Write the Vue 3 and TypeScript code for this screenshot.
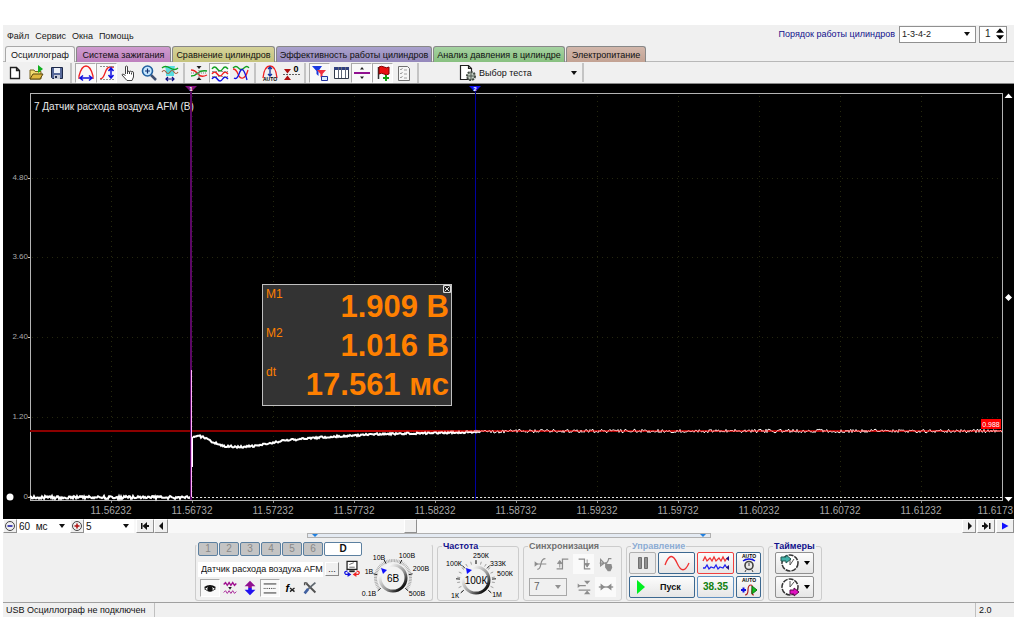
<script setup lang="ts">
import { ref } from 'vue'

interface Shape {
  d?: string
  s?: string
  f?: string
  w?: number
  dash?: string
  t?: string
  x?: number
  y?: number
  size?: number
}
interface Tool {
  name: string
  icon: Shape[]
  pressed?: boolean
}

const red = '#f02020'
const blue = '#1010e0'
const ink = '#202020'
const green = '#10a020'
const mute = '#8c8c8c'

const tabs = [
  { id: 'scope', label: 'Осциллограф' },
  { id: 'ignition', label: 'Система зажигания' },
  { id: 'compare', label: 'Сравнение цилиндров' },
  { id: 'efficiency', label: 'Эффективность работы цилиндров' },
  { id: 'pressure', label: 'Анализ давления в цилиндре' },
  { id: 'power', label: 'Электропитание' },
]
const activeTab = ref('scope')

const toolGroups: Tool[][] = [
  [
    { name: 'Новый', icon: [{ d: 'M5.5 4.5h6l3 3v8h-9zM11.5 4.5v3h3', s: ink, f: '#fff', w: 1.3 }] },
    {
      name: 'Открыть',
      icon: [
        { d: 'M4 16V7h4l1 1.500h6V16z', f: '#f3dc70', s: '#7a6420' },
        { d: 'M4 16l3-5h10l-3 5z', f: '#e0b840', s: '#5a4810' },
        { d: 'M12 2l5 4-5 4z', f: '#10b020' },
      ],
    },
    {
      name: 'Сохранить',
      icon: [
        { d: 'M4.500 4.500h11v11h-10l-1-1z', f: '#56689a', s: '#1c2848' },
        { d: 'M7 5h6v5H7z', f: '#eef2fa' },
        { d: 'M7 12h6v4H7z', f: '#c8ccd8' },
        { d: 'M8 13h2v2H8z', f: '#1c2848' },
      ],
    },
  ],
  [
    {
      name: 'Период',
      pressed: true,
      icon: [
        { d: 'M3 16V13C5 5 8 3 10 3s5 2 7 10v3', s: red, w: 1.3 },
        { d: 'M4 15h12M7 12.500L4 15l3 2.500M13 12.500L16 15l-3 2.500', s: blue, w: 1.5 },
      ],
    },
    {
      name: 'Амплитуда',
      pressed: true,
      icon: [
        { d: 'M3 16c6 0 4-12 10-12h4', s: red, w: 1.3 },
        { d: 'M3 3.500h15M3 16.500h15', s: '#909090', dash: '2 1' },
        { d: 'M14 5v10M11.500 8L14 5l2.500 3M11.500 12L14 15l2.500-3', s: blue, w: 1.5 },
      ],
    },
    {
      name: 'Рука',
      icon: [
        {
          d: 'M7.500 11V3.500q1.300-1 2 0V9q0-1.500 2 -.5 0-1 2 0 2-.5 2 1.500v4l-1.500 3.500h-5L4 12q0-2 3.500.5M9.500 9v2M11.500 9v2M13.500 9.500v2',
          s: '#404040',
          f: '#fff',
        },
      ],
    },
    {
      name: 'Масштаб',
      icon: [
        { d: 'M12 12l5 5', s: '#405070', w: 2.5 },
        { d: 'M13.500 8a5 5 0 1 1-10 0a5 5 0 1 1 10 0', s: '#2060a0', f: '#c8e8ff', w: 1.6 },
        { d: 'M6 8h5M8.500 5.500v5', s: '#103070', w: 1.2 },
      ],
    },
    {
      name: 'Область',
      icon: [
        { d: 'M5 3h10l-1 5v5H6V8z', f: '#58dce0' },
        { d: 'M2 5q3-3 8 0t8 0', s: green, w: 1.3 },
        { d: 'M2 9q2-3 4 0t4 0t4 0t4 0', s: '#a06040', w: 1.2 },
        { d: 'M6 16h8M8 14l-2 2 2 2M12 14l2 2-2 2', s: '#101080', w: 1.2 },
      ],
    },
  ],
  [
    {
      name: 'Сжать',
      icon: [
        { d: 'M2 7q4 0 7 4t9 1', s: red, w: 1.3 },
        { d: 'M2 13q4 0 7-3t9-2', s: green, w: 1.3 },
        { d: 'M7.500 3h5l-2.500 3zM7.500 17h5l-2.500-3z', f: ink },
        { d: 'M2 10h16M10 5v10', s: '#808080', dash: '1 1' },
      ],
    },
    {
      name: 'Все каналы',
      pressed: true,
      icon: [
        { d: 'M2 6q2.500-4 5.300 0t5.300 0t5.300 0', s: green, w: 1.4 },
        { d: 'M2 11q2.500-4 5.300 0t5.300 0t5.300 0', s: red, w: 1.4 },
        { d: 'M2 16q2.500-4 5.300 0t5.300 0t5.300 0', s: blue, w: 1.4 },
        { d: 'M2 8.500h16M2 13.500h16', s: '#909090', dash: '2 1' },
      ],
    },
    {
      name: 'Наложить',
      icon: [
        { d: 'M2 5q3-3 5.500 0t5.500 0t5 0', s: green, w: 1.3 },
        { d: 'M2 6q3 0 5 5t5 4t5-8', s: red, w: 1.3 },
        { d: 'M3 15q3 2 5-4t4-4t4 10', s: blue, w: 1.3 },
      ],
    },
  ],
  [
    {
      name: 'Автоподбор',
      icon: [
        { d: 'M3 15C4 5 7 3 10 3s6 2 7 12', s: red, w: 1.3 },
        { d: 'M10 4v9M8 6l2-2 2 2M8 11l2 2 2-2', s: '#1030a0', w: 1.3 },
        { t: 'AUTO', x: 10, y: 18, size: 5 },
      ],
    },
    {
      name: 'Обнулить',
      icon: [
        { d: 'M2 11.500h17', s: '#606060', dash: '2 1' },
        { d: 'M3 6h7l-3.500 4.500zM3 17h7l-3.500-4.500z', f: '#b01010' },
        { t: '0', x: 15, y: 9, size: 9 },
      ],
    },
  ],
  [
    {
      name: 'Фильтр',
      pressed: true,
      icon: [
        { d: 'M2 3h10l-3.500 5v5l-2-2V8z', f: '#1838e0' },
        { d: 'M7 7h9l-3.500 4v5l-2-2v-3z', f: '#f03040' },
        { d: 'M11.500 13.500h6v4h-6z', f: '#d8ecff', s: '#2030a0' },
      ],
    },
    {
      name: 'Таблица',
      icon: [
        { d: 'M3.500 4.500h14v11h-14z', f: '#fff', s: '#303848' },
        { d: 'M3 4h15v3H3z', f: '#304080' },
        { d: 'M7.500 4v11M10.500 4v11M14.500 4v11', s: '#606878' },
      ],
    },
    {
      name: 'Линия',
      pressed: true,
      icon: [
        { d: 'M2 10h16', s: '#901090', w: 2 },
        { d: 'M8 6.500l2-2.500 2 2.500zM8 13.500l2 2.500 2-2.500z', f: ink },
      ],
    },
    {
      name: 'Добавить флаг',
      pressed: true,
      icon: [
        { d: 'M5.500 4v12', s: '#303030', w: 1.5 },
        { d: 'M6 4q2.500-1.500 5 0t5 0v7q-2.500 1.500-5 0t-5 0z', f: '#e81010', s: '#800000' },
        { d: 'M13 12v6M10 15h6', s: '#10a010', w: 2 },
      ],
    },
    {
      name: 'Отчёт',
      icon: [
        { d: 'M4.500 3.500h9l2 2v12h-11z', f: '#f6f6f6', s: '#707070' },
        { d: 'M6 6l1 1 1.500-2M6 10l1 1 1.500-2M6 14l1 1 1.500-2M10 7h3M10 11h3M10 15h3', s: '#a0a0a0' },
      ],
    },
  ],
]

const gearPage: Shape[] = [
  { d: 'M2.500 2.500h8l3 3v11h-11zM10.500 2.500v3h3', s: ink, f: '#fff', w: 1.2 },
  { d: 'M17 13a4 4 0 1 1-8 0a4 4 0 1 1 8 0', s: '#404840', f: '#c0ccc0', w: 2, dash: '2 1' },
  { d: 'M13 9v8M9 13h8', s: '#505850' },
]

const channelTools: Tool[] = [
  {
    name: 'Показать канал',
    pressed: true,
    icon: [
      { d: 'M4 11q6-6 12 0q-6 5-12 0z', f: '#fff', s: ink },
      { d: 'M13 11a3 3 0 1 1-6 0a3 3 0 1 1 6 0', f: '#101010' },
      { d: 'M4 9.500q6-4 12 0', s: '#101010', w: 1.8 },
    ],
  },
  {
    name: 'Инверсия',
    icon: [
      { d: 'M3 6l2-2 2 3 2-3 2 3 2-3 2 3 2-2', s: '#a01090', w: 1.6 },
      { d: 'M3 15l2-2 2 3 2-3 2 3 2-3 2 3 2-2', s: '#a01090' },
      { d: 'M8 9h4l-2 3z', f: ink },
    ],
  },
  {
    name: 'Смещение',
    icon: [
      { d: 'M10 2l6 6h-4v2H8V8H4z', f: '#901090' },
      { d: 'M10 18l6-6h-4v-2H8v2H4z', f: '#2010f0' },
    ],
  },
  {
    name: 'Уровни',
    pressed: true,
    icon: [
      { d: 'M3 5.500h14M3 15.500h14', s: ink },
      { d: 'M3 10.500h14', s: ink, dash: '1 1' },
    ],
  },
  {
    name: 'Функция',
    icon: [{ t: 'f', x: 7, y: 14, size: 12 }, { d: 'M10 10l5 4M10 14l5-4', s: ink, w: 1.5 }],
  },
  {
    name: 'Настройки',
    icon: [
      { d: 'M6 5l10 10', s: '#505050', w: 2 },
      { d: 'M16 4l-8 7', s: '#606870', w: 2 },
      { d: 'M8 11l-4 5', s: '#4060a0', w: 3 },
      { d: 'M4 4l3 .5M4 4v3', s: '#505050', w: 1.5 },
    ],
  },
]

const deviceIcon: Shape[] = [
  { d: 'M4.500 1.500h11v9h-11z', f: '#fff', s: ink, w: 1.4 },
  { d: 'M7 5l5-2M7 8h6', s: '#606060' },
  { d: 'M7 12.500h6', s: ink, w: 2 },
  { d: 'M5 12q-5 1-2 4h5M5 14l3 2-3 2', s: blue, w: 1.4 },
  { d: 'M15 12q5 1 2 4h-5M15 14l-3 2 3 2', s: red, w: 1.4 },
]

const syncTop: Tool[] = [
  { name: 'Без синхронизации', icon: [{ d: 'M7 16q3 0 4-6t5-6M5 10h12', s: mute, w: 1.3 }, { d: 'M4 7l4 3-4 3z', f: mute }] },
  { name: 'По фронту', icon: [{ d: 'M4 15.500h6.500v-11H17', s: mute, w: 1.4 }, { d: 'M7.500 14V8M5 9.500L7.500 6 10 9.500z', s: mute, f: mute }] },
  { name: 'По спаду', pressed: true, icon: [{ d: 'M4 4.500h6.500v11H17', s: mute, w: 1.4 }, { d: 'M13.500 5v6M11 9.500l2.500 4 2.500-4z', s: mute, f: mute }] },
  {
    name: 'Вручную',
    icon: [
      { d: 'M3 9h6q3 0 4-5h3M4 5l4 4-4 3z', s: mute, w: 1.3 },
      { d: 'M9 8l3 2 4 0 1 4-2 4h-3l-3-4z', f: mute },
    ],
  },
]
const syncBottom: Tool[] = [
  { name: 'Уровень', icon: [{ d: 'M4 8.500h8M4 13.500h13', s: mute, w: 1.3 }, { d: 'M10 3h7l-3.500 4zM10 18h7l-3.500-4zM3 6l3 2.500-3 2.500z', f: mute }] },
  { name: 'Центр', pressed: true, icon: [{ d: 'M2 10h16', s: mute, w: 1.5 }, { d: 'M4 6l5 4-5 4zM16 6l-5 4 5 4z', f: mute }] },
]

const autoClock: Shape[] = [
  { t: 'AUTO', x: 10, y: 5, size: 5 },
  { d: 'M4 8q6-4 12 0M4 8l3-2M16 8l-3-2', s: blue, w: 1.5 },
  { d: 'M14 12.500a4 4 0 1 1-8 0a4 4 0 1 1 8 0', f: '#e8e8e8', s: '#404040', w: 1.6 },
  { d: 'M10 10v3M7 17l-1 2M13 17l1 2', s: '#404040' },
]
const autoPlay: Shape[] = [
  { t: 'AUTO', x: 10, y: 5, size: 5 },
  { d: 'M6 18q3 0 3-5t3-5q2 0 1 5t2 5', s: '#b02020', w: 1.2 },
  { d: 'M2 13h5M4.500 10.500v5', s: blue, w: 2 },
  { d: 'M13 9l5 4-5 4z', f: '#10c020', s: '#107010' },
]

const plotLeft = 30
const plotRight = 1002
const yMarks = [
  { y: 178, label: '4.80' },
  { y: 257, label: '3.60' },
  { y: 337, label: '2.40' },
  { y: 417, label: '1.20' },
  { y: 497, label: '0' },
]
const xMarks = Array.from({ length: 11 }, (_, i) => ({
  x: Math.round(111 + i * 81),
  label: (11.56232 + i * 0.005).toFixed(5),
}))

const curve: [number, number][] = [
  [193, 437], [199, 436], [205, 438], [213, 442], [222, 446], [240, 447], [256, 446],
  [275, 442], [300, 439], [340, 436], [380, 434], [430, 433], [475, 432], [520, 431], [1002, 431],
]
function level(x: number): number {
  for (let i = 1; i < curve.length; i++) {
    const [x0, y0] = curve[i - 1]
    const [x1, y1] = curve[i]
    if (x <= x1) return y0 + ((y1 - y0) * (x - x0)) / (x1 - x0)
  }
  return 431
}
let seed = 17
function noise(): number {
  seed = (seed * 16807) % 2147483647
  return seed / 2147483647 - 0.5
}
function trace(from: number, to: number, at: (x: number) => number, amp: number): string {
  const points: string[] = []
  for (let x = from; x <= to; x++) points.push(`${x},${(at(x) + noise() * amp).toFixed(1)}`)
  return points.join(' ')
}
const idleTrace = trace(plotLeft, 190, () => 497.5, 3)
const riseTrace = trace(193, 480, level, 2)
const flatTrace = trace(480, plotRight, level, 3.5)

const readings = [
  { name: 'M1', value: '1.909 В' },
  { name: 'M2', value: '1.016 В' },
  { name: 'dt', value: '17.561 мс' },
]

function ticks(cx: number, cy: number, count: number, inner: number, outer: number): string {
  const out: string[] = []
  for (let i = 0; i <= count; i++) {
    const a = ((140 + (260 * i) / count) * Math.PI) / 180
    const c = Math.cos(a)
    const s = Math.sin(a)
    out.push(`M${(cx + c * inner).toFixed(1)} ${(cy + s * inner).toFixed(1)}L${(cx + c * outer).toFixed(1)} ${(cy + s * outer).toFixed(1)}`)
  }
  return out.join('')
}
const knobs = {
  volts: {
    name: 'Диапазон', value: '6В', cx: 34, fine: ticks(34, 30, 50, 16, 19), coarse: ticks(34, 30, 5, 16, 20),
    labels: [
      { t: '0.1В', x: 10, y: 48 }, { t: '1В', x: 10, y: 26 }, { t: '10В', x: 20, y: 12 },
      { t: '100В', x: 48, y: 10 }, { t: '200В', x: 62, y: 23 }, { t: '500В', x: 58, y: 48 },
    ],
  },
  rate: {
    name: 'Частота дискретизации', value: '100К', cx: 38, fine: ticks(38, 30, 16, 16, 19), coarse: ticks(38, 30, 6, 16, 20),
    labels: [
      { t: '1К', x: 17, y: 48 }, { t: '100К', x: 16, y: 16 }, { t: '250К', x: 43, y: 8 },
      { t: '333К', x: 60, y: 16 }, { t: '500К', x: 67, y: 26 }, { t: '1М', x: 59, y: 47 },
    ],
  },
}
</script>

<template>
  <main class="window">
    <header class="menubar">
      <nav class="menu">
        <a href="#">Файл</a><a href="#">Сервис</a><a href="#">Окна</a><a href="#">Помощь</a>
      </nav>
      <div class="order">
        <label for="order">Порядок работы цилиндров</label>
        <span class="pick order-pick"><select id="order"><option>1-3-4-2</option></select></span>
        <span class="spin">
          <input aria-label="Номер цилиндра" value="1" />
          <svg viewBox="0 0 9 13"><path d="M0 5l4.500-5L9 5zM0 8l4.500 5L9 8z" /></svg>
        </span>
      </div>
    </header>

    <div class="tabs" role="tablist">
      <button
        v-for="tab in tabs" :key="tab.id" role="tab" class="tab"
        :class="[tab.id, { active: tab.id === activeTab }]" @click="activeTab = tab.id"
      >{{ tab.label }}</button>
    </div>

    <div class="toolbar">
      <div v-for="(group, g) in toolGroups" :key="g" class="tool-group">
        <button v-for="tool in group" :key="tool.name" class="tool" :class="{ pressed: tool.pressed }" :aria-label="tool.name">
          <svg class="icon" viewBox="0 0 20 20">
            <template v-for="(p, i) in tool.icon" :key="i">
              <text v-if="p.t" :x="p.x" :y="p.y" :font-size="p.size" text-anchor="middle">{{ p.t }}</text>
              <path v-else :d="p.d" :fill="p.f || 'none'" :stroke="p.s || 'none'" :stroke-width="p.w || 1" :stroke-dasharray="p.dash" />
            </template>
          </svg>
        </button>
      </div>
      <div class="test">
        <svg class="icon" viewBox="0 0 20 20">
          <path v-for="(p, i) in gearPage" :key="i" :d="p.d" :fill="p.f || 'none'" :stroke="p.s" :stroke-width="p.w || 1" :stroke-dasharray="p.dash" />
        </svg>
        <span class="pick test-pick"><select aria-label="Тест"><option>Выбор теста</option></select></span>
      </div>
    </div>

    <section class="scope">
      <svg class="plot" viewBox="3 84 1011 435">
        <rect x="3" y="84" width="1011" height="435" fill="#000" />
        <g class="grid">
          <path v-for="m in xMarks" :key="m.x" :d="`M${m.x}.5 96V500`" />
          <path v-for="m in yMarks" :key="m.y" :d="`M32 ${m.y}.5H1000`" />
        </g>
        <path d="M32 497.500H1002" stroke="#e0e0e0" stroke-dasharray="2 2" />
        <g class="ylabels">
          <text v-for="m in yMarks" :key="m.y" x="28" :y="m.y + 2">{{ m.label }}</text>
        </g>
        <path v-for="m in yMarks" :key="m.y" :d="`M28 ${m.y}.5H31`" stroke="#c0c0c0" />
        <g class="xlabels">
          <text v-for="m in xMarks" :key="m.x" :x="m.x" y="514">{{ m.label }}</text>
          <text class="last" x="1013" y="514">11.6173</text>
        </g>
        <path v-for="m in xMarks" :key="m.x" :d="`M${m.x}.5 501V503`" stroke="#909090" />
        <rect x="30.500" y="93.500" width="972" height="407" fill="none" stroke="#b4b4b4" />
        <text x="34" y="110" class="title">7 Датчик расхода воздуха AFM (В)</text>

        <path d="M30 431H1002" stroke="#8c0000" stroke-width="2" />
        <polyline :points="idleTrace" class="trace bold" />
        <path d="M475.500 92V500" stroke="#0000a0" />
        <path d="M191 92V500" stroke="#5c0866" stroke-width="2" />
        <path d="M191.500 497V370" stroke="#ffb0ff" />
        <path d="M192.500 467V437" stroke="#fff" />
        <polyline :points="riseTrace" class="trace bold" />
        <polyline :points="flatTrace" class="trace" />
        <path d="M300 431H1002" stroke="#ff1010" opacity=".75" />
        <path d="M185 86h12l-6 6z" fill="#80107c" />
        <path d="M469 86h12l-6 6z" fill="#1010f0" />
        <text x="191" y="91" class="flag">1</text>
        <text x="475" y="91" class="flag">2</text>
        <rect x="981" y="419" width="20" height="10" fill="#f00" />
        <text x="991" y="427" class="badge">0.988</text>
        <circle cx="10" cy="497" r="3.500" fill="#fff" />
        <path d="M1004.500 98h8l-4-4.500zM1004.500 497h8l-4 4.500zM1008.500 294l3.500 3.500-3.500 3.500-3.500-3.500z" fill="#fff" />
      </svg>
      <aside class="meter">
        <button class="close" aria-label="Закрыть">
          <svg viewBox="0 0 8 8"><path d="M.5.5h7v7h-7zM1.500 1.500l5 5M6.500 1.500l-5 5" fill="#222" stroke="#ddd" /></svg>
        </button>
        <div v-for="r in readings" :key="r.name" class="reading">
          <span>{{ r.name }}</span><strong>{{ r.value }}</strong>
        </div>
      </aside>
    </section>

    <div class="scroller">
      <button class="mini" aria-label="Уменьшить масштаб">
        <svg viewBox="0 0 12 12"><circle cx="6" cy="6" r="4.500" fill="#eee" stroke="#444" /><path d="M3.500 6h5" stroke="#1010a0" stroke-width="1.500" /></svg>
      </button>
      <span class="pick time-pick"><select aria-label="Развёртка"><option>60 &nbsp;мс</option></select></span>
      <button class="mini" aria-label="Увеличить масштаб">
        <svg viewBox="0 0 12 12"><circle cx="6" cy="6" r="4.500" fill="#eee" stroke="#444" /><path d="M3.500 6h5M6 3.500v5" stroke="#b01010" stroke-width="1.500" /></svg>
      </button>
      <span class="pick zoom-pick"><select aria-label="Масштаб"><option>5</option></select></span>
      <button class="mini wide" aria-label="В начало"><svg viewBox="0 0 12 12"><path d="M2 3h1.500v6H2zM8 2v8L3.500 6zM8 5h2v2H8z" fill="#111" /></svg></button>
      <button class="mini" aria-label="Назад"><svg viewBox="0 0 12 12"><path d="M8 2v8L4 6z" fill="#111" /></svg></button>
      <div class="track"><div class="thumb"></div></div>
      <button class="mini" aria-label="Вперёд"><svg viewBox="0 0 12 12"><path d="M5 2v8l4-4z" fill="#111" /></svg></button>
      <button class="mini wide" aria-label="В конец"><svg viewBox="0 0 12 12"><path d="M9 3h1.500v6H9zM4 2v8l4.500-4zM2 5h2v2H2z" fill="#111" /></svg></button>
      <button class="mini wide" aria-label="Воспроизвести"><svg viewBox="0 0 12 12"><path d="M3 2.500v7L9.500 6z" fill="#1010ff" /></svg></button>
    </div>

    <section class="panel">
      <div class="handle"><i></i><i></i></div>
      <div class="groups">
        <div class="box channels">
          <div class="channel-side">
            <div class="numbers">
              <button v-for="n in 6" :key="n" class="num">{{ n }}</button>
              <button class="num digital">D</button>
            </div>
            <div class="sensor">
              <input aria-label="Датчик" value="Датчик расхода воздуха AFM" />
              <button class="dots" aria-label="Выбрать датчик">...</button>
              <button class="tool" aria-label="Устройство">
                <svg class="icon" viewBox="0 0 20 20">
                  <path v-for="(p, i) in deviceIcon" :key="i" :d="p.d" :fill="p.f || 'none'" :stroke="p.s" :stroke-width="p.w || 1" />
                </svg>
              </button>
            </div>
            <div class="channel-tools">
              <button v-for="tool in channelTools" :key="tool.name" class="tool" :class="{ pressed: tool.pressed }" :aria-label="tool.name">
                <svg class="icon" viewBox="0 0 20 20">
                  <template v-for="(p, i) in tool.icon" :key="i">
                    <text v-if="p.t" class="fx" :x="p.x" :y="p.y" :font-size="p.size" text-anchor="middle">{{ p.t }}</text>
                    <path v-else :d="p.d" :fill="p.f || 'none'" :stroke="p.s || 'none'" :stroke-width="p.w || 1" :stroke-dasharray="p.dash" />
                  </template>
                </svg>
              </button>
            </div>
          </div>
          <div class="knob">
            <svg viewBox="0 0 74 52">
              <defs>
                <linearGradient id="rim" x1="0" y1="0" x2="1" y2="1">
                  <stop offset=".2" stop-color="#f4f4f4" /><stop offset=".6" stop-color="#909090" /><stop offset=".9" stop-color="#000" />
                </linearGradient>
              </defs>
              <path :d="knobs.volts.fine" stroke="#b0b0b0" /><path :d="knobs.volts.coarse" stroke="#222" />
              <circle :cx="knobs.volts.cx" cy="30" r="13" fill="#f2f2f2" stroke="url(#rim)" stroke-width="3" />
              <path d="M22 20l6 2-4 4z" fill="#1010ff" />
              <text v-for="l in knobs.volts.labels" :key="l.t" :x="l.x" :y="l.y">{{ l.t }}</text>
              <text class="value" :x="knobs.volts.cx" y="34">{{ knobs.volts.value }}</text>
            </svg>
            <input type="range" :aria-label="knobs.volts.name" />
          </div>
        </div>

        <fieldset class="box rate">
          <legend>Частота</legend>
          <div class="knob">
            <svg viewBox="0 0 78 52">
              <path :d="knobs.rate.fine" stroke="#a0a0a0" /><path :d="knobs.rate.coarse" stroke="#222" />
              <circle :cx="knobs.rate.cx" cy="30" r="13" fill="#f2f2f2" stroke="url(#rim)" stroke-width="3" />
              <path d="M28 18l6 2-5 4z" fill="#1010ff" />
              <text v-for="l in knobs.rate.labels" :key="l.t" :x="l.x" :y="l.y">{{ l.t }}</text>
              <text class="value" :x="knobs.rate.cx" y="34">{{ knobs.rate.value }}</text>
            </svg>
            <input type="range" :aria-label="knobs.rate.name" />
          </div>
        </fieldset>

        <fieldset class="box sync">
          <legend>Синхронизация</legend>
          <div class="sync-row">
            <button v-for="tool in syncTop" :key="tool.name" class="tool" :class="{ lit: tool.pressed }" :aria-label="tool.name">
              <svg class="icon" viewBox="0 0 20 20"><path v-for="(p, i) in tool.icon" :key="i" :d="p.d" :fill="p.f || 'none'" :stroke="p.s || 'none'" :stroke-width="p.w || 1" /></svg>
            </button>
          </div>
          <div class="sync-row">
            <span class="pick sync-pick"><select aria-label="Канал синхронизации"><option>7</option></select></span>
            <button v-for="tool in syncBottom" :key="tool.name" class="tool" :class="{ lit: tool.pressed }" :aria-label="tool.name">
              <svg class="icon" viewBox="0 0 20 20"><path v-for="(p, i) in tool.icon" :key="i" :d="p.d" :fill="p.f || 'none'" :stroke="p.s || 'none'" :stroke-width="p.w || 1" /></svg>
            </button>
          </div>
        </fieldset>

        <fieldset class="box control">
          <legend>Управление</legend>
          <div class="control-grid">
            <button class="cmd off" aria-label="Пауза"><svg viewBox="0 0 20 20"><path d="M5.500 4.500h3v11h-3zM11.500 4.500h3v11h-3z" fill="#909090" stroke="#707070" /></svg></button>
            <button class="cmd" aria-label="Синусоида"><svg viewBox="0 0 34 20"><path d="M5 12C9 1 13 1 17 10s8 9 12 0" fill="none" stroke="#f03030" stroke-width="1.300" /></svg></button>
            <button class="cmd red" aria-label="Потоки"><svg viewBox="0 0 34 20"><path d="M4 8l2-4 2 4 3-3 2 3 2-4 2 4 3-3 2 3 2-4 2 4 2-3" fill="none" stroke="#f03030" stroke-width="1.300" /><path d="M4 15h2l2-3 2 4 2-2 3 1 2-3 2 4 2-2 3 1 2-3 2 3" fill="none" stroke="#2020f0" stroke-width="1.300" /><path d="M30 3v5l-3-2.500zM30 12v5l-3-2.500z" fill="#201080" /></svg></button>
            <button class="cmd" aria-label="Автоматический режим">
              <svg viewBox="0 0 20 20"><template v-for="(p, i) in autoClock" :key="i"><text v-if="p.t" :x="p.x" :y="p.y" :font-size="p.size" text-anchor="middle">{{ p.t }}</text><path v-else :d="p.d" :fill="p.f || 'none'" :stroke="p.s" :stroke-width="p.w || 1" /></template></svg>
            </button>
            <button class="cmd start"><svg viewBox="0 0 8 14"><path d="M0 0l8 7-8 7z" fill="#00f020" /></svg><span>Пуск</span></button>
            <button class="cmd rate-value">38.35</button>
            <button class="cmd" aria-label="Автоматический пуск">
              <svg viewBox="0 0 20 20"><template v-for="(p, i) in autoPlay" :key="i"><text v-if="p.t" :x="p.x" :y="p.y" :font-size="p.size" text-anchor="middle">{{ p.t }}</text><path v-else :d="p.d" :fill="p.f || 'none'" :stroke="p.s" :stroke-width="p.w || 1" /></template></svg>
            </button>
          </div>
        </fieldset>

        <fieldset class="box timers">
          <legend>Таймеры</legend>
          <button class="cmd timer" aria-label="Таймер пуска">
            <svg viewBox="0 0 34 20"><circle cx="12" cy="10" r="8" fill="#fff" stroke="#333" stroke-width="1.500" stroke-dasharray="5 1" /><path d="M12 6v6l4-6" fill="none" stroke="#555" /><path d="M3 4h5V2l5 4-5 4V8H3z" fill="#40b0a8" stroke="#205850" /><path d="M26 8h6l-3 4z" fill="#000" /></svg>
          </button>
          <button class="cmd timer" aria-label="Таймер остановки">
            <svg viewBox="0 0 34 20"><circle cx="12" cy="10" r="8" fill="#fff" stroke="#333" stroke-width="1.500" stroke-dasharray="5 1" /><path d="M12 4v6l4-5" fill="none" stroke="#555" /><path d="M12 13h4v-2l5 4-5 4v-2h-4z" fill="#e010c0" stroke="#600850" /><path d="M26 8h6l-3 4z" fill="#000" /></svg>
          </button>
        </fieldset>
      </div>
    </section>

    <footer class="status"><span>USB Осциллограф не подключен</span><span></span><span>2.0</span></footer>
  </main>
</template>

<style>
body { background: #fff; }
</style>

<style scoped>
* { box-sizing: border-box; }
.window {
  margin: 25px 10px 0 3px;
  background: #f0f0f0;
  font: 9px/12px "Liberation Sans", Arial, sans-serif;
  color: #101010;
}
button, input, select { font: inherit; color: inherit; margin: 0; padding: 0; border: 0; border-radius: 0; background: none; }
button { display: flex; align-items: center; justify-content: center; }
svg { display: block; }
svg text { font-family: "Liberation Sans", Arial, sans-serif; }

.menubar { display: flex; justify-content: space-between; height: 21px; }
.menu { display: flex; gap: 6px; padding: 5px 4px; }
.menu a { color: #202020; text-decoration: none; }
.order { display: flex; align-items: center; gap: 3px; padding: 0 7px 3px 0; color: #10108c; }
.order label { padding-right: 1px; }
.pick { position: relative; display: flex; }
.pick select { appearance: none; width: 100%; padding: 0 14px 0 2px; outline: 0; }
.pick::after {
  content: "";
  position: absolute;
  right: 5px;
  top: calc(50% - 2px);
  border: 3px solid transparent;
  border-top: 4px solid #101010;
  border-bottom: 0;
}
.order-pick { width: 77px; height: 17px; background: #fff; border: 1px solid #909090; color: #202020; }
.spin { display: flex; align-items: center; width: 28px; height: 17px; background: #fff; border: 1px solid #909090; color: #202020; font-size: 10px; }
.spin input { width: 16px; padding-left: 5px; }
.spin svg { width: 8px; height: 12px; }

.tabs { display: flex; gap: 1px; padding: 0 2px; height: 16px; border-bottom: 1px solid #b8b8b8; }
.tab { height: 16px; border: 1px solid #888; border-bottom: 0; border-radius: 3px 3px 0 0; white-space: nowrap; }
.tab.active { border-color: #a8a8a8; background: #f6f6f6; }
.tab.scope { width: 70px; }
.tab.ignition { width: 95px; background: linear-gradient(#cf9bcf, #bd80be); }
.tab.compare { width: 103px; background: linear-gradient(#d5d29a, #c5c37c); }
.tab.efficiency { width: 156px; background: linear-gradient(#aaa2cd, #9488bb); }
.tab.pressure { width: 132px; background: linear-gradient(#a6d3a2, #88c080); }
.tab.power { width: 80px; background: linear-gradient(#d2b7ab, #c3a293); }

.toolbar { display: flex; align-items: center; height: 22px; padding-left: 1px; border-bottom: 1px solid #888; }
.tool-group { display: flex; align-items: center; padding-right: 3px; margin-right: 3px; border-right: 2px solid #c4c4c4; }
.tool { width: 21px; height: 20px; border: 1px solid transparent; flex: none; }
.tool.pressed { border-color: #aaa #fff #fff #aaa; background: #f9f9f9; }
.tool.lit { background: #fafafa; }
.icon { width: 20px; height: 20px; flex: none; overflow: visible; }
.icon text, .cmd svg text { font-weight: bold; }
.test { display: flex; align-items: center; margin-left: 36px; border-right: 2px solid #c4c4c4; height: 19px; }
.test-pick { width: 104px; }
.test-pick select { padding-left: 1px; }

.scope { position: relative; }
.plot { width: 100%; height: auto; }
.grid path { stroke: #25280e; stroke-dasharray: 1 4; }
.ylabels text { fill: #a8a8a8; font-size: 8px; text-anchor: end; }
.xlabels text { fill: #a8a8a8; font-size: 10px; text-anchor: middle; }
.xlabels .last { text-anchor: end; }
.title { fill: #e8e8e8; font-size: 10px; }
.trace { fill: none; stroke: #fff; stroke-width: 1; }
.trace.bold { stroke-width: 2; }
.plot .flag { fill: #fff; font-size: 6px; font-weight: bold; text-anchor: middle; }
.plot .badge { fill: #fff; font-size: 7px; text-anchor: middle; }
.meter {
  position: absolute;
  left: 259px;
  top: 200px;
  width: 190px;
  padding: 2px 2px 1px 3px;
  border: 1px solid #c0c0c0;
  background: #333;
  color: #ff8000;
}
.close { position: absolute; right: 0; top: 0; width: 8px; height: 8px; }
.close svg { width: 8px; height: 8px; }
.reading { display: flex; justify-content: space-between; height: 39px; font-size: 12px; line-height: 14px; }
.reading strong { font-size: 31px; line-height: 39px; }

.scroller { display: flex; height: 14px; background: #f8f8f8; font-size: 10px; }
.scroller .pick { background: #fff; }
.scroller select { line-height: 13px; }
.time-pick { width: 53px; }
.zoom-pick { width: 50px; margin-right: 2px; }
.mini { width: 14px; background: #f0f0f0; border: 1px solid; border-color: #fff #909090 #909090 #fff; flex: none; }
.mini svg { width: 12px; height: 12px; flex: none; }
.mini.wide { width: 18px; }
.track ~ .mini { margin-left: 1px; }
.track { flex: 1; display: flex; }
.thumb { margin-left: 29.8%; width: 13px; background: #f0f0f0; border: 1px solid; border-color: #fff #909090 #909090 #fff; }

.panel { border-bottom: 1px solid #a0a0a0; }
.handle {
  display: flex;
  justify-content: space-between;
  align-items: center;
  width: 404px;
  height: 5px;
  margin: 0 auto;
  padding: 0 4px;
  border: 1px solid #b0b0b0;
  background: #e4eaf2;
}
.handle i { border: 3px solid transparent; border-top: 3px solid #2080e0; border-bottom: 0; }
.groups { display: flex; justify-content: center; gap: 4px; padding: 2px 0 1px; }
.box { margin: 0; padding: 0; border: 1px solid #ccc; border-radius: 3px; min-width: 0; height: 61px; }
legend { margin-left: 4px; padding: 0 1px; font-size: 9px; font-weight: bold; line-height: 12px; color: #10108c; }
.channels { display: flex; width: 238px; margin-top: 4px; height: 57px; border-top-color: transparent; }
.channel-side { width: 168px; padding-left: 2px; }
.numbers { display: flex; margin-top: -3px; gap: 1px; }
.num { width: 20px; height: 14px; border: 1px solid #5c80a0; border-radius: 2px; background: #c4c4c4; color: #888; font-size: 10px; }
.num.digital { width: 38px; background: #fff; color: #101010; font-weight: bold; }
.sensor { display: flex; align-items: center; gap: 2px; margin-top: 4px; height: 18px; }
.sensor input { width: 125px; height: 15px; padding-left: 3px; background: #fff; }
.dots { width: 14px; height: 14px; border: 1px solid; border-color: #fff #888 #888 #fff; line-height: 6px; }
.channel-tools { display: flex; padding-left: 2px; margin-top: 1px; }
.channel-tools .tool { width: 20px; height: 18px; }
.channels .icon { width: 18px; height: 18px; }
.fx { font-style: italic; }
.knob { position: relative; }
.knob svg { width: 74px; height: 52px; }
.rate .knob svg { width: 78px; }
.channels .knob { margin-left: -3px; margin-top: 3px; }
.rate .knob { margin-top: -2px; }
.knob path { fill: none; }
.knob path[fill] { fill: #1010ff; }
.knob text { font-size: 7px; text-anchor: middle; }
.knob .value { font-size: 10px; }
.knob input { position: absolute; inset: 14px 22px; width: 30px; opacity: 0; }
.rate { width: 82px; }
.sync { width: 99px; }
.sync legend { color: #707070; }
.sync-row { display: flex; justify-content: space-between; padding: 0 5px; align-items: center; height: 23px; }
.sync-pick { width: 38px; height: 18px; border: 1px solid #a8a8a8; font-size: 10px; color: #606060; margin-right: 5px; }
.sync-pick select { padding-left: 4px; }
.sync-pick::after { border-top-color: #909090; }
.sync .icon { width: 18px; height: 18px; }
.control { width: 138px; }
.control legend { color: #8cacd4; }
.control-grid { display: grid; grid-template-columns: 27px 37px 37px 25px; grid-auto-rows: 22px; gap: 2px; padding-left: 2px; }
.cmd { border: 1px solid #3c6890; border-radius: 2px; background: linear-gradient(#fcfcfc, #e6e6e6); font-weight: bold; }
.cmd svg { height: 20px; width: auto; overflow: visible; }
.cmd.off { border-color: #b0b0b0; background: #ececec; }
.cmd.red { border-color: #f04040; }
.start { grid-column: span 2; justify-content: flex-start; padding-left: 7px; }
.start svg { width: 8px; height: 14px; }
.start span { margin-left: 15px; }
.rate-value { border-color: #6090c0; color: #108010; font-size: 10px; }
.timers { width: 54px; }
.timers .cmd { width: 39px; height: 22px; margin: 0 0 2px 6px; border-color: #909090; }

.status { display: flex; height: 14px; line-height: 14px; padding-left: 3px; }
.status span:first-child { width: 149px; border-right: 1px solid #c0c0c0; white-space: nowrap; }
.status span:nth-child(2) { flex: 1; border-right: 1px solid #c0c0c0; }
.status span:last-child { width: 38px; padding-left: 3px; }
</style>
